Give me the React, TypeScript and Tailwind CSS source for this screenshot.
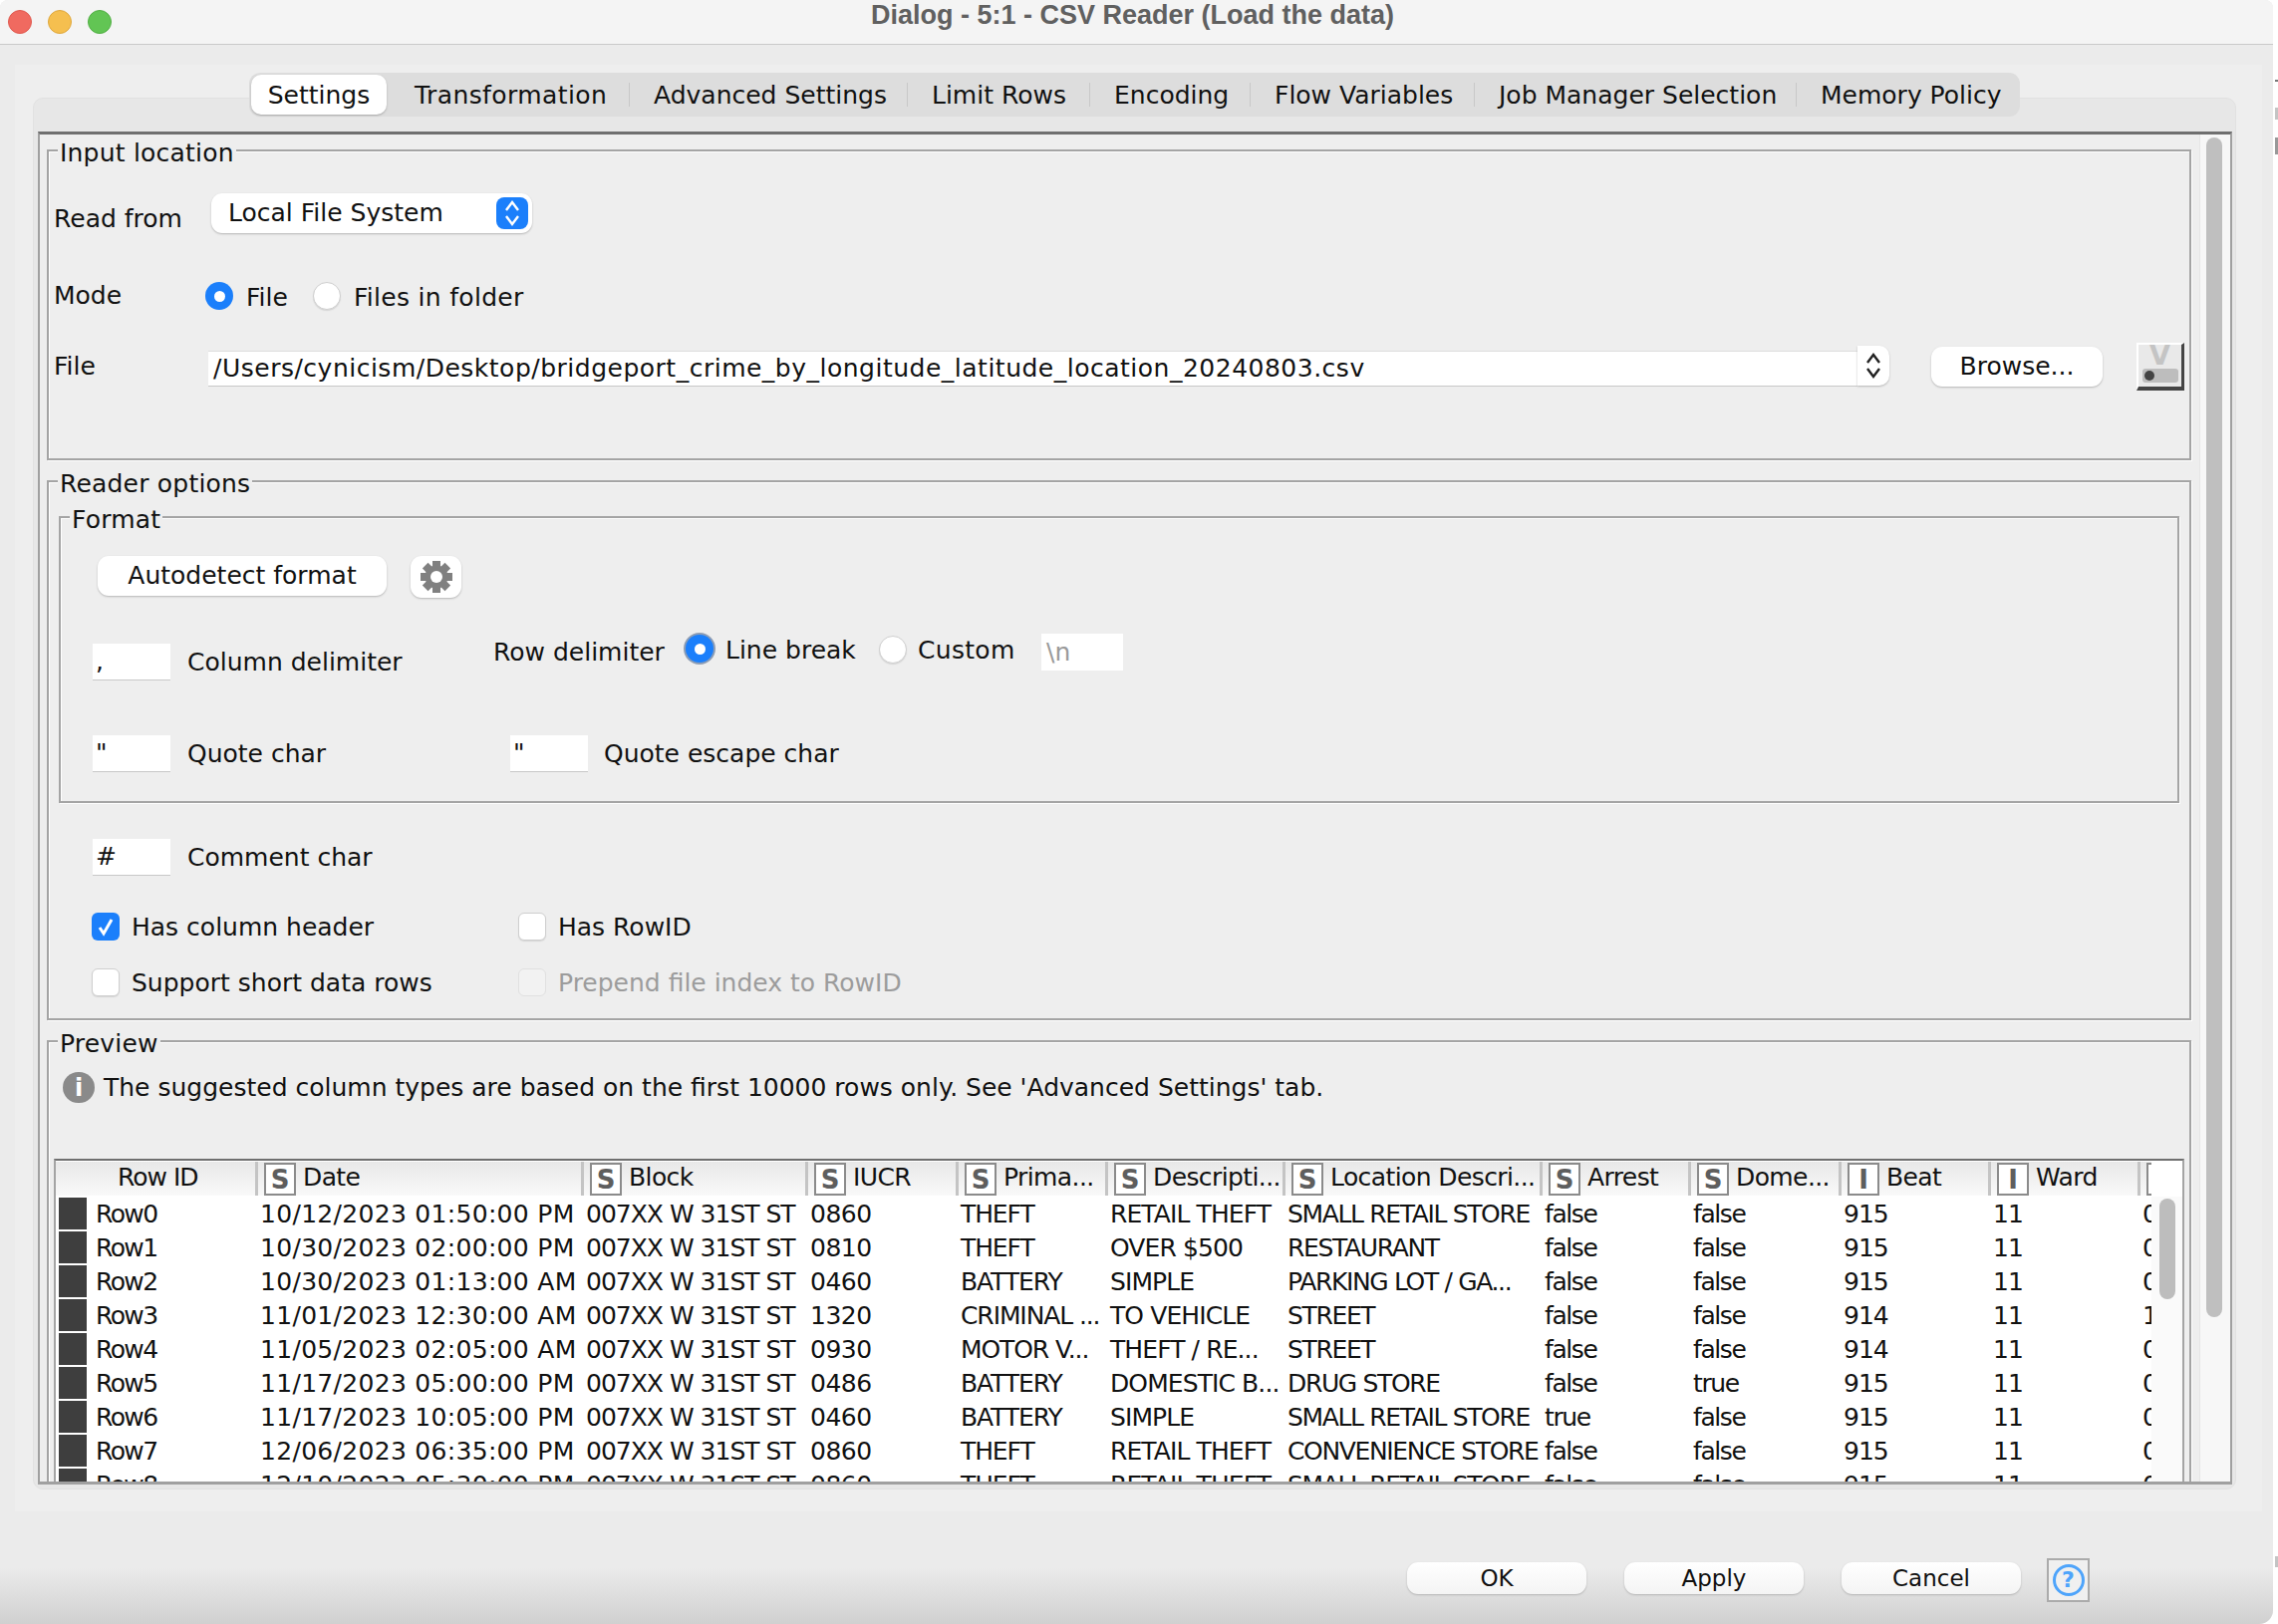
const font = "[font-family:'DejaVu_Sans','Liberation_Sans',sans-serif]";

const tabs = [
  { label: "Transformation", width: "w-[215px] tracking-[0.4px]" },
  { label: "Advanced Settings", width: "w-[254px]" },
  { label: "Limit Rows", width: "w-[158px]" },
  { label: "Encoding", width: "w-[136px]" },
  { label: "Flow Variables", width: "w-[200px]" },
  { label: "Job Manager Selection", width: "w-[298px]" },
];

const columns = [
  { title: "Date", type: "S" },
  { title: "Block", type: "S" },
  { title: "IUCR", type: "S" },
  { title: "Prima...", type: "S" },
  { title: "Descripti...", type: "S" },
  { title: "Location Descri...", type: "S" },
  { title: "Arrest", type: "S" },
  { title: "Dome...", type: "S" },
  { title: "Beat", type: "I" },
  { title: "Ward", type: "I" },
  { title: "", type: "" },
];

// letter spacing per column, the font's caps run wider than the original's
const cellTracking = [
  "tracking-[-1.6px]",
  "tracking-[0.3px]",
  "tracking-[-1px]",
  "tracking-[-0.5px]",
  "tracking-[-1.1px]",
  "tracking-[-0.9px]",
  "tracking-[-1.35px]",
  "tracking-[-1.4px]",
  "tracking-[-1.4px]",
  "tracking-[-1px]",
  "tracking-[-1px]",
  "tracking-normal",
];

const rows = [
  ["Row0", "10/12/2023 01:50:00 PM", "007XX W 31ST ST", "0860", "THEFT", "RETAIL THEFT", "SMALL RETAIL STORE", "false", "false", "915", "11", "0"],
  ["Row1", "10/30/2023 02:00:00 PM", "007XX W 31ST ST", "0810", "THEFT", "OVER $500", "RESTAURANT", "false", "false", "915", "11", "0"],
  ["Row2", "10/30/2023 01:13:00 AM", "007XX W 31ST ST", "0460", "BATTERY", "SIMPLE", "PARKING LOT / GA...", "false", "false", "915", "11", "0"],
  ["Row3", "11/01/2023 12:30:00 AM", "007XX W 31ST ST", "1320", "CRIMINAL ...", "TO VEHICLE", "STREET", "false", "false", "914", "11", "1"],
  ["Row4", "11/05/2023 02:05:00 AM", "007XX W 31ST ST", "0930", "MOTOR V...", "THEFT / RE...", "STREET", "false", "false", "914", "11", "0"],
  ["Row5", "11/17/2023 05:00:00 PM", "007XX W 31ST ST", "0486", "BATTERY", "DOMESTIC B...", "DRUG STORE", "false", "true", "915", "11", "0"],
  ["Row6", "11/17/2023 10:05:00 PM", "007XX W 31ST ST", "0460", "BATTERY", "SIMPLE", "SMALL RETAIL STORE", "true", "false", "915", "11", "0"],
  ["Row7", "12/06/2023 06:35:00 PM", "007XX W 31ST ST", "0860", "THEFT", "RETAIL THEFT", "CONVENIENCE STORE", "false", "false", "915", "11", "0"],
  ["Row8", "12/10/2023 05:30:00 PM", "007XX W 31ST ST", "0860", "THEFT", "RETAIL THEFT", "SMALL RETAIL STORE", "false", "false", "915", "11", "0"],
];

const gridCols =
  "grid grid-cols-[200px_327px_225px_151px_150px_178px_258px_149px_151px_150px_150px_150px]";

function UpDown({ color }: { color: string }) {
  return (
    <svg width="16" height="28" viewBox="0 0 16 28" fill="none" stroke={color} strokeWidth="2.4">
      <path d="M2 11 8 3l6 8" />
      <path d="M2 17 8 25l6-8" />
    </svg>
  );
}

function Gear() {
  return (
    <svg width="32" height="34" viewBox="0 0 32 32" fill="#808080">
      <rect x="12" y="0" width="8" height="32" />
      <rect x="12" y="0" width="8" height="32" transform="rotate(45 16 16)" />
      <rect x="12" y="0" width="8" height="32" transform="rotate(90 16 16)" />
      <rect x="12" y="0" width="8" height="32" transform="rotate(135 16 16)" />
      <circle cx="16" cy="16" r="11.5" />
      <circle cx="16" cy="16" r="6" fill="white" />
    </svg>
  );
}

function Radio({ checked, focus }: { checked?: boolean; focus?: boolean }) {
  if (checked) {
    return (
      <span
        className={`flex h-[28px] w-[28px] shrink-0 items-center justify-center rounded-full bg-[#1b7ffb] ${
          focus ? "ring-2 ring-[#8d9db5]" : ""
        }`}
      >
        <span className="h-[11px] w-[11px] rounded-full bg-white" />
      </span>
    );
  }
  return (
    <span className="block h-[28px] w-[28px] shrink-0 rounded-full border border-[#cfcfcf] bg-white shadow-[0_1px_1px_#d5d5d5]" />
  );
}

function Checkbox({ checked, disabled }: { checked?: boolean; disabled?: boolean }) {
  if (checked) {
    return (
      <span className="flex h-[28px] w-[28px] shrink-0 items-center justify-center rounded-[6px] bg-[#1b7ffb]">
        <svg width="18" height="20" viewBox="0 0 18 20" fill="none" stroke="white" strokeWidth="3">
          <path d="M3 11l4 6 8-14" />
        </svg>
      </span>
    );
  }
  return (
    <span
      className={`h-[28px] w-[28px] shrink-0 rounded-[6px] border ${
        disabled ? "border-[#e0e0e0] bg-[#f2f2f2]" : "border-[#cfcfcf] bg-white shadow-[0_1px_1px_#d5d5d5]"
      }`}
    />
  );
}

function CharField({ value, className }: { value: string; className?: string }) {
  return (
    <div
      className={`flex h-[37px] w-[78px] shrink-0 items-center border-b border-[#c8c8c8] bg-white pl-[3px] leading-[30px] ${
        className ?? ""
      }`}
    >
      {value}
    </div>
  );
}

function PushButton({ label, className }: { label: string; className: string }) {
  return (
    <div className={`flex items-center justify-center rounded-[11px] bg-white shadow-[0_1px_2px_#b5b5b5] ${className}`}>
      {label}
    </div>
  );
}

function Titled({ title, className, children }: { title: string; className: string; children: React.ReactNode }) {
  return (
    <div className={`relative border-2 border-[#a4a4a4] shadow-[inset_1px_1px_0_#fff,1px_1px_0_#fff] ${className}`}>
      <span className="absolute top-[-13px] left-[9px] bg-[#eeeeee] px-[2px] leading-[30px] tracking-[0.2px]">{title}</span>
      {children}
    </div>
  );
}

function TypeBox({ type }: { type: string }) {
  return (
    <span className="ml-[6px] flex h-[33px] w-[32px] shrink-0 items-center justify-center border-2 border-[#8b8b8b] bg-white text-[26px] font-bold tracking-normal text-[#5e5e5e]">
      {type}
    </span>
  );
}

function PreviewTable() {
  return (
    <div className="mt-[56px] ml-[5px] flex h-[325px] w-[2138px] border-x-2 border-t-2 border-x-[#a4a4a4] border-t-[#6f6f6f] bg-white">
      <div className="w-[2103px] overflow-hidden">
        <div className={`${gridCols} mt-[1px] h-[33px] border-b-[3px] border-[#b4b4b4]`}>
          <div className="bg-gradient-to-b from-[#e8e8e8] to-[#f9f9f9] pt-[1px] pl-[62px] leading-[30px] tracking-[-1px]">
            Row ID
          </div>
          {columns.map((col, i) => (
            <div
              key={i}
              className="flex border-l-[3px] border-[#c4c4c4] bg-gradient-to-b from-[#e8e8e8] to-[#f9f9f9] pt-[1px] leading-[30px]"
            >
              {col.type ? (
                <TypeBox type={col.type} />
              ) : (
                <span className="ml-[6px] h-[33px] w-[32px] border-2 border-[#8b8b8b] bg-white" />
              )}
              <span className="ml-[7px] tracking-[-0.6px] whitespace-nowrap">{col.title}</span>
            </div>
          ))}
        </div>
        <div className="pt-[3px]">
          {rows.map((row) => (
            <div key={row[0]} className={`${gridCols} h-[34px]`}>
              {row.map((cell, i) =>
                i === 0 ? (
                  <div key={i} className="flex items-start pl-[3px]">
                    <span className="h-[32px] w-[28px] bg-[#3e3e3e]" />
                    <span className={`ml-[9px] pt-[1px] leading-[32px] ${cellTracking[i]}`}>{cell}</span>
                  </div>
                ) : (
                  <div key={i} className={`overflow-hidden pt-[1px] pl-[5px] leading-[32px] whitespace-nowrap ${cellTracking[i]}`}>
                    {cell}
                  </div>
                ),
              )}
            </div>
          ))}
        </div>
      </div>
      <div className="mt-[36px] flex-1 bg-[#fafafa] pt-[2px] pl-[8px]">
        <div className="h-[101px] w-[16px] rounded-full bg-[#bdbdbd]" />
      </div>
    </div>
  );
}

export default function App() {
  return (
    <div className={`flex h-[1630px] w-[2286px] overflow-hidden bg-white text-[25px] text-[#111111] ${font}`}>
      <div className="flex h-[1630px] w-[2281px] shrink-0 flex-col overflow-hidden rounded-t-[8px] rounded-br-[14px] bg-[#ebebeb]">
        {/* Title bar */}
        <div className="grid h-[45px] shrink-0 grid-cols-[1fr_auto_1fr] items-center border-b border-[#c9c9c9] bg-[#f4f4f4] pl-[8px]">
          <div className="flex gap-[16px]">
            <span className="h-[24px] w-[24px] rounded-full border border-[#e0594f] bg-[#f06a60]" />
            <span className="h-[24px] w-[24px] rounded-full border border-[#dfa83e] bg-[#f5bf4f]" />
            <span className="h-[24px] w-[24px] rounded-full border border-[#52af45] bg-[#62c554]" />
          </div>
          <div className="mr-[16px] pb-[14px] [font-family:'Liberation_Sans',sans-serif] text-[27px] leading-[30px] font-bold text-[#606060]">
            Dialog - 5:1 - CSV Reader (Load the data)
          </div>
          <div />
        </div>

        {/* Main */}
        <div className="mt-[20px] mr-[11px] ml-[15px] flex h-[1452px] shrink-0 flex-col bg-[#eeeeee] pt-[8px]">
          <div className="relative z-10 ml-[235px] flex h-[44px] w-[1777px] items-center rounded-[11px] bg-[#dddddd] pl-[2px] leading-[30px]">
            <div className="flex h-[40px] w-[136px] items-center justify-center rounded-[10px] bg-white pt-[1px] shadow-[0_1px_2px_#a8a8a8]">
              Settings
            </div>
            <div className="w-[28px]" />
            {tabs.map((tab) => (
              <div key={tab.label} className="flex items-center">
                <div className={`${tab.width} pt-[1px] whitespace-nowrap`}>{tab.label}</div>
                <div className="mr-[24px] h-[24px] w-[1px] bg-[#c8c8c8]" />
              </div>
            ))}
            <div className="pt-[1px] whitespace-nowrap">Memory Policy</div>
          </div>

          <div className="-mt-[19px] ml-[18px] h-[1397px] w-[2211px] rounded-[10px] border border-[#e1e1e1] bg-[#e7e7e7] pt-[33px] pl-[4px]">
            <div className="flex h-[1358px] w-[2202px] overflow-hidden border-x-2 border-t-[3px] border-b-[3px] border-x-[#a0a0a0] border-t-[#6f6f6f] border-b-[#a0a0a0] bg-[#eeeeee]">
              <div className="w-[2167px] shrink-0 pt-[15px] pl-[7px]">
                {/* Input location */}
                <Titled title="Input location" className="h-[312px] w-[2152px]">
                  <div className="mt-[42px] flex h-[40px] items-start pl-[5px]">
                    <span className="mt-[11px] w-[158px] leading-[30px]">Read from</span>
                    <div className="flex h-[40px] w-[322px] items-center justify-between rounded-[11px] bg-white pr-[4px] pl-[17px] shadow-[0_1px_2px_#b5b5b5]">
                      <span className="leading-[30px]">Local File System</span>
                      <span className="flex h-[32px] w-[32px] items-center justify-center rounded-[8px] bg-[#1b7ffb]">
                        <UpDown color="white" />
                      </span>
                    </div>
                  </div>
                  <div className="mt-[48px] flex h-[30px] items-center pl-[5px]">
                    <span className="w-[152px] leading-[30px]">Mode</span>
                    <Radio checked />
                    <span className="ml-[13px] w-[67px] pt-[3px] leading-[30px]">File</span>
                    <Radio />
                    <span className="ml-[13px] pt-[3px] leading-[30px] tracking-[0.3px]">Files in folder</span>
                  </div>
                  <div className="mt-[32px] flex h-[48px] items-start pl-[5px]">
                    <span className="mt-[9px] w-[155px] leading-[30px]">File</span>
                    <div className="mt-[8px] flex h-[36px] w-[1655px] items-center border-t border-b border-t-[#dedede] border-b-[#c8c8c8] bg-white pl-[5px] tracking-[0.5px] whitespace-nowrap">
                      /Users/cynicism/Desktop/bridgeport_crime_by_longitude_latitude_location_20240803.csv
                    </div>
                    <div className="mt-[3px] flex h-[40px] w-[32px] items-center justify-center rounded-r-[10px] bg-white shadow-[0_1px_2px_#b5b5b5]">
                      <UpDown color="#222222" />
                    </div>
                    <PushButton label="Browse..." className="mt-[4px] ml-[42px] h-[40px] w-[172px]" />
                    <div className="ml-[34px] flex h-[48px] w-[48px] flex-col items-center border-t-2 border-r-[3px] border-b-[4px] border-l-2 border-t-white border-r-[#444444] border-b-[#444444] border-l-white bg-[#e9e9e9]">
                      <span className="h-[22px] text-[27px] leading-[22px] font-bold text-[#c4c4c4]">V</span>
                      <span className="mt-[2px] flex h-[14px] w-[36px] items-center rounded-[3px] bg-[#bdbdbd] pl-[2px]">
                        <span className="h-[10px] w-[10px] rounded-full bg-[#444444]" />
                      </span>
                    </div>
                  </div>
                </Titled>

                {/* Reader options */}
                <Titled title="Reader options" className="mt-[20px] h-[542px] w-[2152px]">
                  <Titled title="Format" className="mt-[34px] ml-[10px] h-[288px] w-[2128px]">
                    <div className="mt-[38px] ml-[37px] flex h-[42px] items-start">
                      <PushButton label="Autodetect format" className="h-[40px] w-[290px]" />
                      <div className="ml-[24px] flex h-[42px] w-[51px] items-center justify-center rounded-[11px] bg-white shadow-[0_1px_2px_#b5b5b5]">
                        <Gear />
                      </div>
                    </div>
                    <div className="mt-[36px] ml-[32px] flex h-[46px] items-start">
                      <CharField value="," className="mt-[10px]" />
                      <span className="mt-[14px] ml-[17px] w-[307px] leading-[30px]">Column delimiter</span>
                      <span className="mt-[4px] w-[193px] leading-[30px]">Row delimiter</span>
                      <div className="mt-[1px]">
                        <Radio checked focus />
                      </div>
                      <span className="mt-[2px] ml-[12px] w-[154px] leading-[30px]">Line break</span>
                      <div className="mt-[2px]">
                        <Radio />
                      </div>
                      <span className="mt-[2px] ml-[11px] w-[124px] leading-[30px] tracking-[0.3px]">Custom</span>
                      <div className="flex h-[37px] w-[82px] items-center bg-white pl-[5px] text-[#9a9a9a]">\n</div>
                    </div>
                    <div className="mt-[56px] ml-[32px] flex h-[37px] items-center">
                      <CharField value={'"'} />
                      <span className="ml-[17px] w-[324px] leading-[30px]">Quote char</span>
                      <CharField value={'"'} />
                      <span className="ml-[16px] leading-[30px]">Quote escape char</span>
                    </div>
                  </Titled>
                  <div className="mt-[36px] ml-[44px] flex h-[37px] items-center">
                    <CharField value="#" />
                    <span className="ml-[17px] leading-[30px]">Comment char</span>
                  </div>
                  <div className="mt-[37px] ml-[43px] flex h-[28px] items-center">
                    <Checkbox checked />
                    <span className="ml-[12px] w-[388px] pt-[2px] leading-[30px]">Has column header</span>
                    <Checkbox />
                    <span className="ml-[12px] pt-[2px] leading-[30px]">Has RowID</span>
                  </div>
                  <div className="mt-[28px] ml-[43px] flex h-[28px] items-center">
                    <Checkbox />
                    <span className="ml-[12px] w-[388px] pt-[2px] leading-[30px]">Support short data rows</span>
                    <Checkbox disabled />
                    <span className="ml-[12px] pt-[2px] leading-[30px] text-[#9c9c9c]">Prepend file index to RowID</span>
                  </div>
                </Titled>

                {/* Preview */}
                <Titled title="Preview" className="mt-[20px] h-[460px] w-[2152px]">
                  <div className="mt-[30px] ml-[14px] flex h-[31px] items-center">
                    <span className="flex h-[31px] w-[32px] items-center justify-center rounded-full bg-[#8a8a8a] text-[24px] font-bold text-white">
                      i
                    </span>
                    <span className="ml-[9px] pt-[1px] leading-[30px]">
                      The suggested column types are based on the first 10000 rows only. See 'Advanced Settings' tab.
                    </span>
                  </div>
                  <PreviewTable />
                </Titled>
              </div>
              <div className="flex-1 border-l border-[#e6e6e6] bg-[#f7f7f7] pt-[3px] pl-[6px]">
                <div className="h-[1184px] w-[16px] rounded-full bg-[#bfbfbf]" />
              </div>
            </div>
          </div>
        </div>

        {/* Footer */}
        <div className="flex flex-1 items-start justify-end bg-[linear-gradient(#ebebeb_50%,#d0d0d0)] pt-[51px] pr-[184px] text-[23px]">
          <PushButton label="OK" className="h-[32px] w-[180px] bg-gradient-to-b from-white to-[#f4f4f4]" />
          <PushButton label="Apply" className="ml-[38px] h-[32px] w-[180px] bg-gradient-to-b from-white to-[#f4f4f4]" />
          <PushButton label="Cancel" className="ml-[38px] h-[32px] w-[180px] bg-gradient-to-b from-white to-[#f4f4f4]" />
          <div className="-mt-[4px] ml-[26px] flex h-[44px] w-[43px] items-center justify-center border-2 border-[#ababab] bg-[#f0f0f0]">
            <span className="flex h-[32px] w-[32px] items-center justify-center rounded-full border-[3px] border-[#4ea4fb] text-[22px] leading-none font-bold text-[#4ea4fb]">
              ?
            </span>
          </div>
        </div>
      </div>
      {/* Sliver of the desktop behind the window */}
      <div className="flex-1 pt-[80px]">
        <div className="ml-[2px] h-[2px] bg-[#777777]" />
        <div className="mt-[26px] ml-[2px] h-[12px] bg-[#c4c4c4]" />
        <div className="mt-[18px] ml-[2px] h-[17px] bg-[#999999]" />
        <div className="mt-[1407px] ml-[2px] h-[11px] bg-[#c4c4c4]" />
      </div>
    </div>
  );
}
